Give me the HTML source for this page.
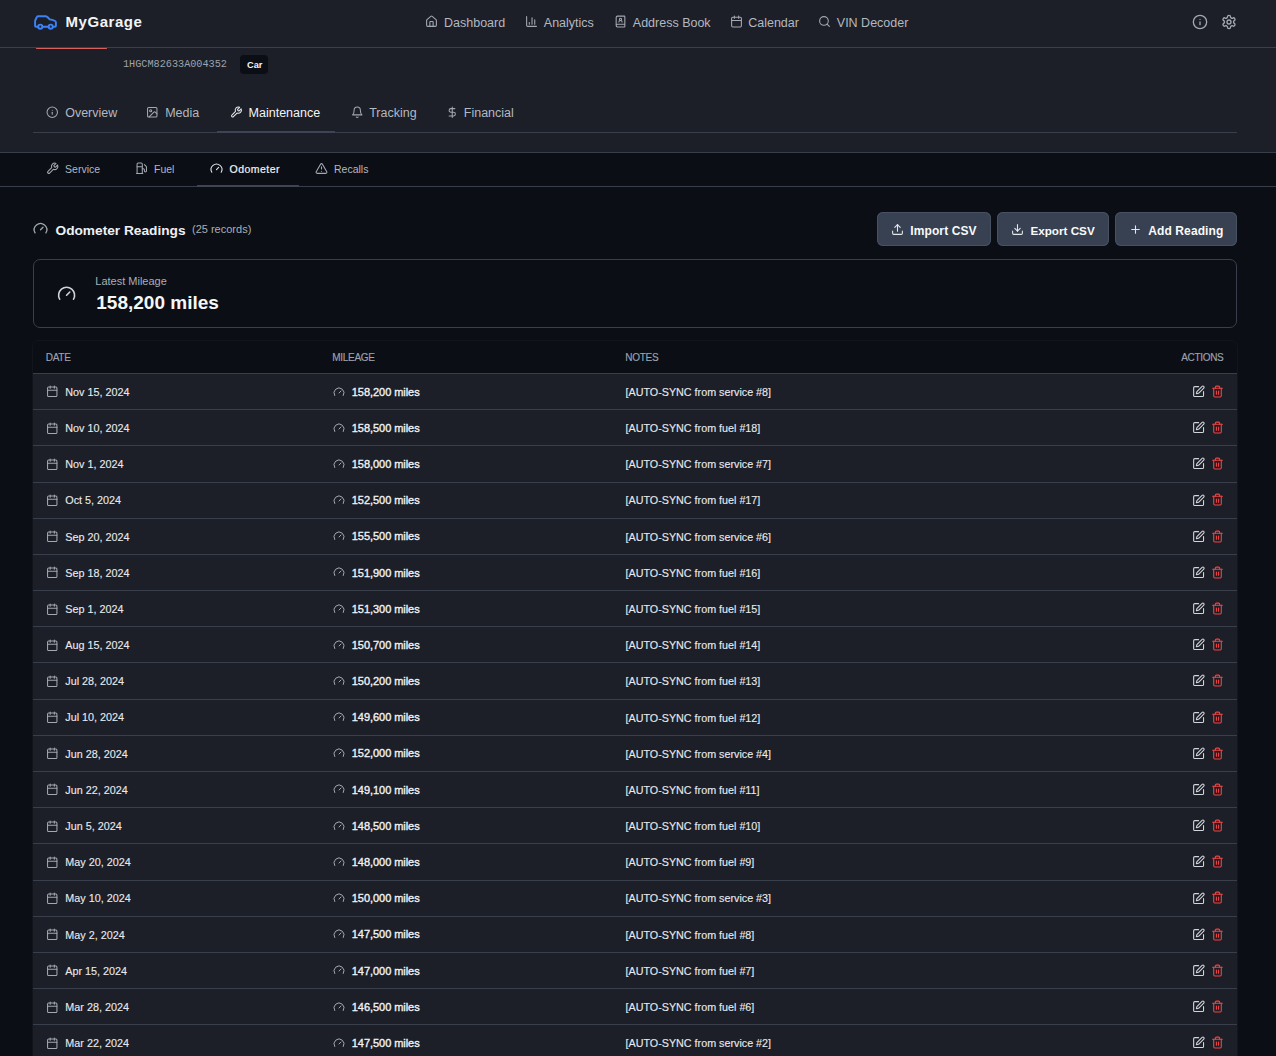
<!DOCTYPE html>
<html><head><meta charset="utf-8"><title>MyGarage</title>
<style>
html,body{margin:0;padding:0}
body{width:1276px;height:1056px;overflow:hidden;background:#0b0e15;position:relative;font-family:"Liberation Sans",sans-serif}
.blk{position:absolute}
.t{position:absolute;white-space:nowrap}
.ic{position:absolute;overflow:visible}
</style></head><body>
<div class="blk" style="left:0;top:0;width:1276px;height:152px;background:#1c1f27"></div>
<div class="blk" style="left:0;top:47px;width:1276px;height:1px;background:#393e4b"></div>
<div class="blk" style="left:36px;top:48px;width:71px;height:1px;background:#d8615e;border-radius:1px"></div>
<svg class="ic" style="left:33.3px;top:9.2px;width:25px;height:25px;" viewBox="0 0 24 24" fill="none" stroke="#3b82f6" stroke-width="1.85" stroke-linecap="round" stroke-linejoin="round"><path d="M19 17h2c.6 0 1-.4 1-1v-3c0-.9-.7-1.7-1.5-1.9C18.7 10.6 16 10 16 10s-1.3-1.4-2.2-2.3c-.5-.4-1.1-.7-1.8-.7H5c-.6 0-1.1.4-1.4.9l-1.4 2.9A3.7 3.7 0 0 0 2 12v4c0 .6.4 1 1 1h2"/><circle cx="7" cy="17" r="2"/><path d="M9 17h6"/><circle cx="17" cy="17" r="2"/></svg>
<div class="t" style="left:65.5px;top:14.40px;font-size:15px;line-height:15px;color:#f3f4f6;font-weight:700;font-family:'Liberation Sans', sans-serif;letter-spacing:0.55px">MyGarage</div>
<svg class="ic" style="left:425.3px;top:15.1px;width:13px;height:13px;" viewBox="0 0 24 24" fill="none" stroke="#a3a8b1" stroke-width="2" stroke-linecap="round" stroke-linejoin="round"><path d="M15 21v-8a1 1 0 0 0-1-1h-4a1 1 0 0 0-1 1v8"/><path d="M3 10a2 2 0 0 1 .709-1.528l7-5.999a2 2 0 0 1 2.582 0l7 5.999A2 2 0 0 1 21 10v9a2 2 0 0 1-2 2H5a2 2 0 0 1-2-2z"/></svg>
<div class="t" style="left:444.0px;top:16.92px;font-size:12.5px;line-height:12.5px;color:#b3b8c1;font-weight:400;font-family:'Liberation Sans', sans-serif;">Dashboard</div>
<svg class="ic" style="left:525.3px;top:15.1px;width:13px;height:13px;" viewBox="0 0 24 24" fill="none" stroke="#a3a8b1" stroke-width="2" stroke-linecap="round" stroke-linejoin="round"><path d="M3 3v16a2 2 0 0 0 2 2h16"/><path d="M18 17V9"/><path d="M13 17V5"/><path d="M8 17v-3"/></svg>
<div class="t" style="left:543.8000000000001px;top:16.92px;font-size:12.5px;line-height:12.5px;color:#b3b8c1;font-weight:400;font-family:'Liberation Sans', sans-serif;">Analytics</div>
<svg class="ic" style="left:614.0px;top:15.1px;width:13px;height:13px;" viewBox="0 0 24 24" fill="none" stroke="#a3a8b1" stroke-width="2" stroke-linecap="round" stroke-linejoin="round"><path d="M15 13a3 3 0 1 0-6 0"/><path d="M4 19.5v-15A2.5 2.5 0 0 1 6.5 2H19a1 1 0 0 1 1 1v18a1 1 0 0 1-1 1H6.5a1 1 0 0 1 0-5H20"/><circle cx="12" cy="8" r="2"/></svg>
<div class="t" style="left:632.8000000000001px;top:16.92px;font-size:12.5px;line-height:12.5px;color:#b3b8c1;font-weight:400;font-family:'Liberation Sans', sans-serif;">Address Book</div>
<svg class="ic" style="left:730.3px;top:15.1px;width:13px;height:13px;" viewBox="0 0 24 24" fill="none" stroke="#a3a8b1" stroke-width="2" stroke-linecap="round" stroke-linejoin="round"><path d="M8 2v4"/><path d="M16 2v4"/><rect width="18" height="18" x="3" y="4" rx="2"/><path d="M3 10h18"/></svg>
<div class="t" style="left:748.2px;top:16.92px;font-size:12.5px;line-height:12.5px;color:#b3b8c1;font-weight:400;font-family:'Liberation Sans', sans-serif;">Calendar</div>
<svg class="ic" style="left:818.3px;top:15.1px;width:13px;height:13px;" viewBox="0 0 24 24" fill="none" stroke="#a3a8b1" stroke-width="2" stroke-linecap="round" stroke-linejoin="round"><circle cx="11" cy="11" r="8"/><path d="m21 21-4.3-4.3"/></svg>
<div class="t" style="left:836.8000000000001px;top:16.92px;font-size:12.5px;line-height:12.5px;color:#b3b8c1;font-weight:400;font-family:'Liberation Sans', sans-serif;">VIN Decoder</div>
<svg class="ic" style="left:1192px;top:14px;width:16px;height:16px;" viewBox="0 0 24 24" fill="none" stroke="#a3a8b1" stroke-width="2" stroke-linecap="round" stroke-linejoin="round"><circle cx="12" cy="12" r="10"/><path d="M12 16v-4"/><path d="M12 8h.01"/></svg>
<svg class="ic" style="left:1221px;top:14px;width:16px;height:16px;" viewBox="0 0 24 24" fill="none" stroke="#a3a8b1" stroke-width="2" stroke-linecap="round" stroke-linejoin="round"><path d="M12.22 2h-.44a2 2 0 0 0-2 2v.18a2 2 0 0 1-1 1.73l-.43.25a2 2 0 0 1-2 0l-.15-.08a2 2 0 0 0-2.73.73l-.22.38a2 2 0 0 0 .73 2.73l.15.1a2 2 0 0 1 1 1.72v.51a2 2 0 0 1-1 1.74l-.15.09a2 2 0 0 0-.73 2.73l.22.38a2 2 0 0 0 2.73.73l.15-.08a2 2 0 0 1 2 0l.43.25a2 2 0 0 1 1 1.73V20a2 2 0 0 0 2 2h.44a2 2 0 0 0 2-2v-.18a2 2 0 0 1 1-1.73l.43-.25a2 2 0 0 1 2 0l.15.08a2 2 0 0 0 2.73-.73l.22-.39a2 2 0 0 0-.73-2.73l-.15-.08a2 2 0 0 1-1-1.74v-.5a2 2 0 0 1 1-1.74l.15-.09a2 2 0 0 0 .73-2.73l-.22-.38a2 2 0 0 0-2.73-.73l-.15.08a2 2 0 0 1-2 0l-.43-.25a2 2 0 0 1-1-1.73V4a2 2 0 0 0-2-2z"/><circle cx="12" cy="12" r="3"/></svg>
<div class="t" style="left:123px;top:60.37px;font-size:10.2px;line-height:10.2px;color:#9ca3af;font-weight:400;font-family:'Liberation Mono', monospace;">1HGCM82633A004352</div>
<div class="blk" style="left:240px;top:55px;width:28px;height:19px;background:#0b0e15;border-radius:4px"></div>
<div class="t" style="left:247px;top:60.81px;font-size:9.2px;line-height:9.2px;color:#f3f4f6;font-weight:700;font-family:'Liberation Sans', sans-serif;">Car</div>
<svg class="ic" style="left:46.25px;top:105.75px;width:12.5px;height:12.5px;" viewBox="0 0 24 24" fill="none" stroke="#a3a8b1" stroke-width="2" stroke-linecap="round" stroke-linejoin="round"><circle cx="12" cy="12" r="10"/><path d="M12 16v-4"/><path d="M12 8h.01"/></svg>
<div class="t" style="left:65.2px;top:106.62px;font-size:12.5px;line-height:12.5px;color:#b3b8c1;font-weight:400;font-family:'Liberation Sans', sans-serif;">Overview</div>
<svg class="ic" style="left:146.15px;top:105.75px;width:12.5px;height:12.5px;" viewBox="0 0 24 24" fill="none" stroke="#a3a8b1" stroke-width="2" stroke-linecap="round" stroke-linejoin="round"><rect width="18" height="18" x="3" y="3" rx="2" ry="2"/><circle cx="9" cy="9" r="2"/><path d="m21 15-3.086-3.086a2 2 0 0 0-2.828 0L6 21"/></svg>
<div class="t" style="left:165.2px;top:106.62px;font-size:12.5px;line-height:12.5px;color:#b3b8c1;font-weight:400;font-family:'Liberation Sans', sans-serif;">Media</div>
<svg class="ic" style="left:230.15px;top:105.75px;width:12.5px;height:12.5px;" viewBox="0 0 24 24" fill="none" stroke="#e5e7eb" stroke-width="2" stroke-linecap="round" stroke-linejoin="round"><path d="M14.7 6.3a1 1 0 0 0 0 1.4l1.6 1.6a1 1 0 0 0 1.4 0l3.77-3.77a6 6 0 0 1-7.94 7.94l-6.91 6.91a2.12 2.12 0 0 1-3-3l6.910-6.91a6 6 0 0 1 7.94-7.94l-3.76 3.760z"/></svg>
<div class="t" style="left:248.6px;top:106.62px;font-size:12.5px;line-height:12.5px;color:#f3f4f6;font-weight:400;font-family:'Liberation Sans', sans-serif;">Maintenance</div>
<svg class="ic" style="left:350.85px;top:105.75px;width:12.5px;height:12.5px;" viewBox="0 0 24 24" fill="none" stroke="#a3a8b1" stroke-width="2" stroke-linecap="round" stroke-linejoin="round"><path d="M6 8a6 6 0 0 1 12 0c0 7 3 9 3 9H3s3-2 3-9"/><path d="M10.3 21a1.94 1.94 0 0 0 3.4 0"/></svg>
<div class="t" style="left:369.2px;top:106.62px;font-size:12.5px;line-height:12.5px;color:#b3b8c1;font-weight:400;font-family:'Liberation Sans', sans-serif;">Tracking</div>
<svg class="ic" style="left:445.55px;top:105.75px;width:12.5px;height:12.5px;" viewBox="0 0 24 24" fill="none" stroke="#a3a8b1" stroke-width="2" stroke-linecap="round" stroke-linejoin="round"><line x1="12" x2="12" y1="2" y2="22"/><path d="M17 5H9.5a3.5 3.5 0 0 0 0 7h5a3.5 3.5 0 0 1 0 7H6"/></svg>
<div class="t" style="left:463.8px;top:106.62px;font-size:12.5px;line-height:12.5px;color:#b3b8c1;font-weight:400;font-family:'Liberation Sans', sans-serif;">Financial</div>
<div class="blk" style="left:33px;top:132px;width:1204px;height:1px;background:#393e4b"></div>
<div class="blk" style="left:217px;top:131px;width:118px;height:2px;background:#3f4454"></div>
<div class="blk" style="left:0;top:152px;width:1276px;height:1px;background:#393e4b"></div>
<div class="blk" style="left:0;top:186px;width:1276px;height:1px;background:#393e4b"></div>
<svg class="ic" style="left:45.8px;top:161.8px;width:13px;height:13px;" viewBox="0 0 24 24" fill="none" stroke="#a3a8b1" stroke-width="2" stroke-linecap="round" stroke-linejoin="round"><path d="M14.7 6.3a1 1 0 0 0 0 1.4l1.6 1.6a1 1 0 0 0 1.4 0l3.77-3.77a6 6 0 0 1-7.94 7.94l-6.91 6.91a2.12 2.12 0 0 1-3-3l6.910-6.91a6 6 0 0 1 7.94-7.94l-3.76 3.760z"/></svg>
<div class="t" style="left:65.1px;top:164.11px;font-size:10.5px;line-height:10.5px;color:#b3b8c1;font-weight:400;font-family:'Liberation Sans', sans-serif;">Service</div>
<svg class="ic" style="left:135.1px;top:161.8px;width:12.5px;height:12.5px;" viewBox="0 0 24 24" fill="none" stroke="#a3a8b1" stroke-width="2" stroke-linecap="round" stroke-linejoin="round"><line x1="3" x2="15" y1="22" y2="22"/><line x1="4" x2="14" y1="9" y2="9"/><path d="M14 22V4a2 2 0 0 0-2-2H6a2 2 0 0 0-2 2v18"/><path d="M14 13h2a2 2 0 0 1 2 2v2a2 2 0 0 0 2 2a2 2 0 0 0 2-2V9.83a2 2 0 0 0-.59-1.42L18 5"/></svg>
<div class="t" style="left:154.0px;top:164.11px;font-size:10.5px;line-height:10.5px;color:#b3b8c1;font-weight:400;font-family:'Liberation Sans', sans-serif;">Fuel</div>
<svg class="ic" style="left:210.0px;top:162.05px;width:13px;height:13px;" viewBox="0 0 24 24" fill="none" stroke="#e5e7eb" stroke-width="2" stroke-linecap="round" stroke-linejoin="round"><path d="m12 14 4-4"/><path d="M3.34 19a10 10 0 1 1 17.32 0"/></svg>
<div class="t" style="left:229.60000000000002px;top:164.11px;font-size:10.5px;line-height:10.5px;color:#f3f4f6;font-weight:400;font-family:'Liberation Sans', sans-serif;-webkit-text-stroke:0.2px #f3f4f6;letter-spacing:0.45px">Odometer</div>
<svg class="ic" style="left:314.8px;top:161.8px;width:13px;height:13px;" viewBox="0 0 24 24" fill="none" stroke="#a3a8b1" stroke-width="2" stroke-linecap="round" stroke-linejoin="round"><path d="m21.73 18-8-14a2 2 0 0 0-3.48 0l-8 14A2 2 0 0 0 4 21h16a2 2 0 0 0 1.73-3"/><path d="M12 9v4"/><path d="M12 17h.01"/></svg>
<div class="t" style="left:334.0px;top:164.11px;font-size:10.5px;line-height:10.5px;color:#b3b8c1;font-weight:400;font-family:'Liberation Sans', sans-serif;">Recalls</div>
<div class="blk" style="left:197px;top:185px;width:102px;height:2px;background:#3f4454"></div>
<svg class="ic" style="left:33px;top:221px;width:15px;height:15px;" viewBox="0 0 24 24" fill="none" stroke="#a3a8b1" stroke-width="2" stroke-linecap="round" stroke-linejoin="round"><path d="m12 14 4-4"/><path d="M3.34 19a10 10 0 1 1 17.32 0"/></svg>
<div class="t" style="left:55.5px;top:223.90px;font-size:13.7px;line-height:13.7px;color:#eef0f3;font-weight:700;font-family:'Liberation Sans', sans-serif;">Odometer Readings</div>
<div class="t" style="left:192px;top:224.19px;font-size:11px;line-height:11px;color:#a9aeb7;font-weight:400;font-family:'Liberation Sans', sans-serif;">(25 records)</div>
<div class="blk" style="left:877px;top:212px;width:114px;height:34px;background:#374151;border-radius:6px;box-shadow:inset 0 0 0 1px #475162"></div>
<svg class="ic" style="left:891.0px;top:223.1px;width:13px;height:13px;" viewBox="0 0 24 24" fill="none" stroke="#e5e7eb" stroke-width="2" stroke-linecap="round" stroke-linejoin="round"><path d="M21 15v4a2 2 0 0 1-2 2H5a2 2 0 0 1-2-2v-4"/><polyline points="17 8 12 3 7 8"/><line x1="12" x2="12" y1="3" y2="15"/></svg>
<div class="t" style="left:910.3px;top:224.84px;font-size:12px;line-height:12px;color:#f9fafb;font-weight:700;font-family:'Liberation Sans', sans-serif;letter-spacing:0.1px">Import CSV</div>
<div class="blk" style="left:997px;top:212px;width:112px;height:34px;background:#374151;border-radius:6px;box-shadow:inset 0 0 0 1px #475162"></div>
<svg class="ic" style="left:1011.0px;top:223.1px;width:13px;height:13px;" viewBox="0 0 24 24" fill="none" stroke="#e5e7eb" stroke-width="2" stroke-linecap="round" stroke-linejoin="round"><path d="M21 15v4a2 2 0 0 1-2 2H5a2 2 0 0 1-2-2v-4"/><polyline points="7 10 12 15 17 10"/><line x1="12" x2="12" y1="15" y2="3"/></svg>
<div class="t" style="left:1030.3999999999999px;top:225.10px;font-size:11.7px;line-height:11.7px;color:#f9fafb;font-weight:700;font-family:'Liberation Sans', sans-serif;">Export CSV</div>
<div class="blk" style="left:1115px;top:212px;width:122px;height:34px;background:#374151;border-radius:6px;box-shadow:inset 0 0 0 1px #475162"></div>
<svg class="ic" style="left:1129.0px;top:223.1px;width:13px;height:13px;" viewBox="0 0 24 24" fill="none" stroke="#e5e7eb" stroke-width="2" stroke-linecap="round" stroke-linejoin="round"><path d="M5 12h14"/><path d="M12 5v14"/></svg>
<div class="t" style="left:1148.3px;top:224.84px;font-size:12px;line-height:12px;color:#f9fafb;font-weight:700;font-family:'Liberation Sans', sans-serif;letter-spacing:0.1px">Add Reading</div>
<div class="blk" style="left:33px;top:259px;width:1202px;height:67px;border:1px solid #3a3e4d;border-radius:7px"></div>
<svg class="ic" style="left:57.2px;top:284.2px;width:19.2px;height:19.2px;" viewBox="0 0 24 24" fill="none" stroke="#d1d5db" stroke-width="2" stroke-linecap="round" stroke-linejoin="round"><path d="m12 14 4-4"/><path d="M3.34 19a10 10 0 1 1 17.32 0"/></svg>
<div class="t" style="left:95.3px;top:275.69px;font-size:11px;line-height:11px;color:#a9aeb7;font-weight:400;font-family:'Liberation Sans', sans-serif;">Latest Mileage</div>
<div class="t" style="left:96.3px;top:292.92px;font-size:19px;line-height:19px;color:#f5f6f8;font-weight:700;font-family:'Liberation Sans', sans-serif;">158,200 miles</div>
<div class="blk" style="left:32px;top:340px;width:1204px;height:800px;border:1px solid #12151c;border-radius:7px"></div>
<div class="t" style="left:45.8px;top:352.54px;font-size:10px;line-height:10px;color:#9ca3af;font-weight:400;font-family:'Liberation Sans', sans-serif;letter-spacing:-0.3px;-webkit-text-stroke:0.15px #9ca3af">DATE</div>
<div class="t" style="left:332.3px;top:352.54px;font-size:10px;line-height:10px;color:#9ca3af;font-weight:400;font-family:'Liberation Sans', sans-serif;letter-spacing:-0.3px;-webkit-text-stroke:0.15px #9ca3af">MILEAGE</div>
<div class="t" style="left:625.3px;top:352.54px;font-size:10px;line-height:10px;color:#9ca3af;font-weight:400;font-family:'Liberation Sans', sans-serif;letter-spacing:-0.3px;-webkit-text-stroke:0.15px #9ca3af">NOTES</div>
<div class="t" style="right:52.5px;top:352.54px;font-size:10px;line-height:10px;color:#9ca3af;letter-spacing:-0.3px;-webkit-text-stroke:0.15px #9ca3af">ACTIONS</div>
<div class="blk" style="left:33px;top:373px;width:1204px;height:36px;background:#1c1f27;border-top:1px solid #393e4b;box-sizing:border-box"></div>
<svg class="ic" style="left:46.15px;top:385.45px;width:12.5px;height:12.5px;" viewBox="0 0 24 24" fill="none" stroke="#a3a8b1" stroke-width="2" stroke-linecap="round" stroke-linejoin="round"><path d="M8 2v4"/><path d="M16 2v4"/><rect width="18" height="18" x="3" y="4" rx="2"/><path d="M3 10h18"/></svg>
<div class="t" style="left:65.3px;top:386.86px;font-size:10.8px;line-height:10.8px;color:#e8eaee;font-weight:400;font-family:'Liberation Sans', sans-serif;-webkit-text-stroke:0.12px #e8eaee">Nov 15, 2024</div>
<svg class="ic" style="left:333.4px;top:385.5px;width:12px;height:12px;" viewBox="0 0 24 24" fill="none" stroke="#a3a8b1" stroke-width="2" stroke-linecap="round" stroke-linejoin="round"><path d="m12 14 4-4"/><path d="M3.34 19a10 10 0 1 1 17.32 0"/></svg>
<div class="t" style="left:351.8px;top:386.69px;font-size:11px;line-height:11px;color:#f1f2f4;font-weight:400;font-family:'Liberation Sans', sans-serif;-webkit-text-stroke:0.35px #f1f2f4;letter-spacing:-0.05px">158,200 miles</div>
<div class="t" style="left:625.5px;top:386.90px;font-size:10.75px;line-height:10.75px;color:#e8eaee;font-weight:400;font-family:'Liberation Sans', sans-serif;-webkit-text-stroke:0.12px #e8eaee">[AUTO-SYNC from service #8]</div>
<svg class="ic" style="left:1191.8px;top:385.0px;width:13.2px;height:13.2px;" viewBox="0 0 24 24" fill="none" stroke="#d1d5db" stroke-width="2" stroke-linecap="round" stroke-linejoin="round"><path d="M12 3H5a2 2 0 0 0-2 2v14a2 2 0 0 0 2 2h14a2 2 0 0 0 2-2v-7"/><path d="M18.375 2.625a1 1 0 0 1 3 3l-9.013 9.014a2 2 0 0 1-.853.505l-2.873.84a.5.5 0 0 1-.62-.62l.84-2.873a2 2 0 0 1 .506-.852z"/></svg>
<svg class="ic" style="left:1211px;top:384.9px;width:13px;height:13px;" viewBox="0 0 24 24" fill="none" stroke="#ef4444" stroke-width="2" stroke-linecap="round" stroke-linejoin="round"><path d="M3 6h18"/><path d="M19 6v14c0 1-1 2-2 2H7c-1 0-2-1-2-2V6"/><path d="M8 6V4c0-1 1-2 2-2h4c1 0 2 1 2 2v2"/><line x1="10" x2="10" y1="11" y2="17"/><line x1="14" x2="14" y1="11" y2="17"/></svg>
<div class="blk" style="left:33px;top:409px;width:1204px;height:36px;background:#1c1f27;border-top:1px solid #393e4b;box-sizing:border-box"></div>
<svg class="ic" style="left:46.15px;top:421.63px;width:12.5px;height:12.5px;" viewBox="0 0 24 24" fill="none" stroke="#a3a8b1" stroke-width="2" stroke-linecap="round" stroke-linejoin="round"><path d="M8 2v4"/><path d="M16 2v4"/><rect width="18" height="18" x="3" y="4" rx="2"/><path d="M3 10h18"/></svg>
<div class="t" style="left:65.3px;top:423.04px;font-size:10.8px;line-height:10.8px;color:#e8eaee;font-weight:400;font-family:'Liberation Sans', sans-serif;-webkit-text-stroke:0.12px #e8eaee">Nov 10, 2024</div>
<svg class="ic" style="left:333.4px;top:421.68px;width:12px;height:12px;" viewBox="0 0 24 24" fill="none" stroke="#a3a8b1" stroke-width="2" stroke-linecap="round" stroke-linejoin="round"><path d="m12 14 4-4"/><path d="M3.34 19a10 10 0 1 1 17.32 0"/></svg>
<div class="t" style="left:351.8px;top:422.87px;font-size:11px;line-height:11px;color:#f1f2f4;font-weight:400;font-family:'Liberation Sans', sans-serif;-webkit-text-stroke:0.35px #f1f2f4;letter-spacing:-0.05px">158,500 miles</div>
<div class="t" style="left:625.5px;top:423.08px;font-size:10.75px;line-height:10.75px;color:#e8eaee;font-weight:400;font-family:'Liberation Sans', sans-serif;-webkit-text-stroke:0.12px #e8eaee">[AUTO-SYNC from fuel #18]</div>
<svg class="ic" style="left:1191.8px;top:421.18px;width:13.2px;height:13.2px;" viewBox="0 0 24 24" fill="none" stroke="#d1d5db" stroke-width="2" stroke-linecap="round" stroke-linejoin="round"><path d="M12 3H5a2 2 0 0 0-2 2v14a2 2 0 0 0 2 2h14a2 2 0 0 0 2-2v-7"/><path d="M18.375 2.625a1 1 0 0 1 3 3l-9.013 9.014a2 2 0 0 1-.853.505l-2.873.84a.5.5 0 0 1-.62-.62l.84-2.873a2 2 0 0 1 .506-.852z"/></svg>
<svg class="ic" style="left:1211px;top:421.08px;width:13px;height:13px;" viewBox="0 0 24 24" fill="none" stroke="#ef4444" stroke-width="2" stroke-linecap="round" stroke-linejoin="round"><path d="M3 6h18"/><path d="M19 6v14c0 1-1 2-2 2H7c-1 0-2-1-2-2V6"/><path d="M8 6V4c0-1 1-2 2-2h4c1 0 2 1 2 2v2"/><line x1="10" x2="10" y1="11" y2="17"/><line x1="14" x2="14" y1="11" y2="17"/></svg>
<div class="blk" style="left:33px;top:445px;width:1204px;height:37px;background:#1c1f27;border-top:1px solid #393e4b;box-sizing:border-box"></div>
<svg class="ic" style="left:46.15px;top:457.81px;width:12.5px;height:12.5px;" viewBox="0 0 24 24" fill="none" stroke="#a3a8b1" stroke-width="2" stroke-linecap="round" stroke-linejoin="round"><path d="M8 2v4"/><path d="M16 2v4"/><rect width="18" height="18" x="3" y="4" rx="2"/><path d="M3 10h18"/></svg>
<div class="t" style="left:65.3px;top:459.22px;font-size:10.8px;line-height:10.8px;color:#e8eaee;font-weight:400;font-family:'Liberation Sans', sans-serif;-webkit-text-stroke:0.12px #e8eaee">Nov 1, 2024</div>
<svg class="ic" style="left:333.4px;top:457.86px;width:12px;height:12px;" viewBox="0 0 24 24" fill="none" stroke="#a3a8b1" stroke-width="2" stroke-linecap="round" stroke-linejoin="round"><path d="m12 14 4-4"/><path d="M3.34 19a10 10 0 1 1 17.32 0"/></svg>
<div class="t" style="left:351.8px;top:459.05px;font-size:11px;line-height:11px;color:#f1f2f4;font-weight:400;font-family:'Liberation Sans', sans-serif;-webkit-text-stroke:0.35px #f1f2f4;letter-spacing:-0.05px">158,000 miles</div>
<div class="t" style="left:625.5px;top:459.26px;font-size:10.75px;line-height:10.75px;color:#e8eaee;font-weight:400;font-family:'Liberation Sans', sans-serif;-webkit-text-stroke:0.12px #e8eaee">[AUTO-SYNC from service #7]</div>
<svg class="ic" style="left:1191.8px;top:457.36px;width:13.2px;height:13.2px;" viewBox="0 0 24 24" fill="none" stroke="#d1d5db" stroke-width="2" stroke-linecap="round" stroke-linejoin="round"><path d="M12 3H5a2 2 0 0 0-2 2v14a2 2 0 0 0 2 2h14a2 2 0 0 0 2-2v-7"/><path d="M18.375 2.625a1 1 0 0 1 3 3l-9.013 9.014a2 2 0 0 1-.853.505l-2.873.84a.5.5 0 0 1-.62-.62l.84-2.873a2 2 0 0 1 .506-.852z"/></svg>
<svg class="ic" style="left:1211px;top:457.26px;width:13px;height:13px;" viewBox="0 0 24 24" fill="none" stroke="#ef4444" stroke-width="2" stroke-linecap="round" stroke-linejoin="round"><path d="M3 6h18"/><path d="M19 6v14c0 1-1 2-2 2H7c-1 0-2-1-2-2V6"/><path d="M8 6V4c0-1 1-2 2-2h4c1 0 2 1 2 2v2"/><line x1="10" x2="10" y1="11" y2="17"/><line x1="14" x2="14" y1="11" y2="17"/></svg>
<div class="blk" style="left:33px;top:482px;width:1204px;height:36px;background:#1c1f27;border-top:1px solid #393e4b;box-sizing:border-box"></div>
<svg class="ic" style="left:46.15px;top:493.98999999999995px;width:12.5px;height:12.5px;" viewBox="0 0 24 24" fill="none" stroke="#a3a8b1" stroke-width="2" stroke-linecap="round" stroke-linejoin="round"><path d="M8 2v4"/><path d="M16 2v4"/><rect width="18" height="18" x="3" y="4" rx="2"/><path d="M3 10h18"/></svg>
<div class="t" style="left:65.3px;top:495.40px;font-size:10.8px;line-height:10.8px;color:#e8eaee;font-weight:400;font-family:'Liberation Sans', sans-serif;-webkit-text-stroke:0.12px #e8eaee">Oct 5, 2024</div>
<svg class="ic" style="left:333.4px;top:494.03999999999996px;width:12px;height:12px;" viewBox="0 0 24 24" fill="none" stroke="#a3a8b1" stroke-width="2" stroke-linecap="round" stroke-linejoin="round"><path d="m12 14 4-4"/><path d="M3.34 19a10 10 0 1 1 17.32 0"/></svg>
<div class="t" style="left:351.8px;top:495.23px;font-size:11px;line-height:11px;color:#f1f2f4;font-weight:400;font-family:'Liberation Sans', sans-serif;-webkit-text-stroke:0.35px #f1f2f4;letter-spacing:-0.05px">152,500 miles</div>
<div class="t" style="left:625.5px;top:495.44px;font-size:10.75px;line-height:10.75px;color:#e8eaee;font-weight:400;font-family:'Liberation Sans', sans-serif;-webkit-text-stroke:0.12px #e8eaee">[AUTO-SYNC from fuel #17]</div>
<svg class="ic" style="left:1191.8px;top:493.53999999999996px;width:13.2px;height:13.2px;" viewBox="0 0 24 24" fill="none" stroke="#d1d5db" stroke-width="2" stroke-linecap="round" stroke-linejoin="round"><path d="M12 3H5a2 2 0 0 0-2 2v14a2 2 0 0 0 2 2h14a2 2 0 0 0 2-2v-7"/><path d="M18.375 2.625a1 1 0 0 1 3 3l-9.013 9.014a2 2 0 0 1-.853.505l-2.873.84a.5.5 0 0 1-.62-.62l.84-2.873a2 2 0 0 1 .506-.852z"/></svg>
<svg class="ic" style="left:1211px;top:493.43999999999994px;width:13px;height:13px;" viewBox="0 0 24 24" fill="none" stroke="#ef4444" stroke-width="2" stroke-linecap="round" stroke-linejoin="round"><path d="M3 6h18"/><path d="M19 6v14c0 1-1 2-2 2H7c-1 0-2-1-2-2V6"/><path d="M8 6V4c0-1 1-2 2-2h4c1 0 2 1 2 2v2"/><line x1="10" x2="10" y1="11" y2="17"/><line x1="14" x2="14" y1="11" y2="17"/></svg>
<div class="blk" style="left:33px;top:518px;width:1204px;height:36px;background:#1c1f27;border-top:1px solid #393e4b;box-sizing:border-box"></div>
<svg class="ic" style="left:46.15px;top:530.1700000000001px;width:12.5px;height:12.5px;" viewBox="0 0 24 24" fill="none" stroke="#a3a8b1" stroke-width="2" stroke-linecap="round" stroke-linejoin="round"><path d="M8 2v4"/><path d="M16 2v4"/><rect width="18" height="18" x="3" y="4" rx="2"/><path d="M3 10h18"/></svg>
<div class="t" style="left:65.3px;top:531.58px;font-size:10.8px;line-height:10.8px;color:#e8eaee;font-weight:400;font-family:'Liberation Sans', sans-serif;-webkit-text-stroke:0.12px #e8eaee">Sep 20, 2024</div>
<svg class="ic" style="left:333.4px;top:530.22px;width:12px;height:12px;" viewBox="0 0 24 24" fill="none" stroke="#a3a8b1" stroke-width="2" stroke-linecap="round" stroke-linejoin="round"><path d="m12 14 4-4"/><path d="M3.34 19a10 10 0 1 1 17.32 0"/></svg>
<div class="t" style="left:351.8px;top:531.41px;font-size:11px;line-height:11px;color:#f1f2f4;font-weight:400;font-family:'Liberation Sans', sans-serif;-webkit-text-stroke:0.35px #f1f2f4;letter-spacing:-0.05px">155,500 miles</div>
<div class="t" style="left:625.5px;top:531.62px;font-size:10.75px;line-height:10.75px;color:#e8eaee;font-weight:400;font-family:'Liberation Sans', sans-serif;-webkit-text-stroke:0.12px #e8eaee">[AUTO-SYNC from service #6]</div>
<svg class="ic" style="left:1191.8px;top:529.72px;width:13.2px;height:13.2px;" viewBox="0 0 24 24" fill="none" stroke="#d1d5db" stroke-width="2" stroke-linecap="round" stroke-linejoin="round"><path d="M12 3H5a2 2 0 0 0-2 2v14a2 2 0 0 0 2 2h14a2 2 0 0 0 2-2v-7"/><path d="M18.375 2.625a1 1 0 0 1 3 3l-9.013 9.014a2 2 0 0 1-.853.505l-2.873.84a.5.5 0 0 1-.62-.62l.84-2.873a2 2 0 0 1 .506-.852z"/></svg>
<svg class="ic" style="left:1211px;top:529.62px;width:13px;height:13px;" viewBox="0 0 24 24" fill="none" stroke="#ef4444" stroke-width="2" stroke-linecap="round" stroke-linejoin="round"><path d="M3 6h18"/><path d="M19 6v14c0 1-1 2-2 2H7c-1 0-2-1-2-2V6"/><path d="M8 6V4c0-1 1-2 2-2h4c1 0 2 1 2 2v2"/><line x1="10" x2="10" y1="11" y2="17"/><line x1="14" x2="14" y1="11" y2="17"/></svg>
<div class="blk" style="left:33px;top:554px;width:1204px;height:36px;background:#1c1f27;border-top:1px solid #393e4b;box-sizing:border-box"></div>
<svg class="ic" style="left:46.15px;top:566.35px;width:12.5px;height:12.5px;" viewBox="0 0 24 24" fill="none" stroke="#a3a8b1" stroke-width="2" stroke-linecap="round" stroke-linejoin="round"><path d="M8 2v4"/><path d="M16 2v4"/><rect width="18" height="18" x="3" y="4" rx="2"/><path d="M3 10h18"/></svg>
<div class="t" style="left:65.3px;top:567.76px;font-size:10.8px;line-height:10.8px;color:#e8eaee;font-weight:400;font-family:'Liberation Sans', sans-serif;-webkit-text-stroke:0.12px #e8eaee">Sep 18, 2024</div>
<svg class="ic" style="left:333.4px;top:566.4px;width:12px;height:12px;" viewBox="0 0 24 24" fill="none" stroke="#a3a8b1" stroke-width="2" stroke-linecap="round" stroke-linejoin="round"><path d="m12 14 4-4"/><path d="M3.34 19a10 10 0 1 1 17.32 0"/></svg>
<div class="t" style="left:351.8px;top:567.59px;font-size:11px;line-height:11px;color:#f1f2f4;font-weight:400;font-family:'Liberation Sans', sans-serif;-webkit-text-stroke:0.35px #f1f2f4;letter-spacing:-0.05px">151,900 miles</div>
<div class="t" style="left:625.5px;top:567.80px;font-size:10.75px;line-height:10.75px;color:#e8eaee;font-weight:400;font-family:'Liberation Sans', sans-serif;-webkit-text-stroke:0.12px #e8eaee">[AUTO-SYNC from fuel #16]</div>
<svg class="ic" style="left:1191.8px;top:565.9px;width:13.2px;height:13.2px;" viewBox="0 0 24 24" fill="none" stroke="#d1d5db" stroke-width="2" stroke-linecap="round" stroke-linejoin="round"><path d="M12 3H5a2 2 0 0 0-2 2v14a2 2 0 0 0 2 2h14a2 2 0 0 0 2-2v-7"/><path d="M18.375 2.625a1 1 0 0 1 3 3l-9.013 9.014a2 2 0 0 1-.853.505l-2.873.84a.5.5 0 0 1-.62-.62l.84-2.873a2 2 0 0 1 .506-.852z"/></svg>
<svg class="ic" style="left:1211px;top:565.8px;width:13px;height:13px;" viewBox="0 0 24 24" fill="none" stroke="#ef4444" stroke-width="2" stroke-linecap="round" stroke-linejoin="round"><path d="M3 6h18"/><path d="M19 6v14c0 1-1 2-2 2H7c-1 0-2-1-2-2V6"/><path d="M8 6V4c0-1 1-2 2-2h4c1 0 2 1 2 2v2"/><line x1="10" x2="10" y1="11" y2="17"/><line x1="14" x2="14" y1="11" y2="17"/></svg>
<div class="blk" style="left:33px;top:590px;width:1204px;height:36px;background:#1c1f27;border-top:1px solid #393e4b;box-sizing:border-box"></div>
<svg class="ic" style="left:46.15px;top:602.53px;width:12.5px;height:12.5px;" viewBox="0 0 24 24" fill="none" stroke="#a3a8b1" stroke-width="2" stroke-linecap="round" stroke-linejoin="round"><path d="M8 2v4"/><path d="M16 2v4"/><rect width="18" height="18" x="3" y="4" rx="2"/><path d="M3 10h18"/></svg>
<div class="t" style="left:65.3px;top:603.94px;font-size:10.8px;line-height:10.8px;color:#e8eaee;font-weight:400;font-family:'Liberation Sans', sans-serif;-webkit-text-stroke:0.12px #e8eaee">Sep 1, 2024</div>
<svg class="ic" style="left:333.4px;top:602.5799999999999px;width:12px;height:12px;" viewBox="0 0 24 24" fill="none" stroke="#a3a8b1" stroke-width="2" stroke-linecap="round" stroke-linejoin="round"><path d="m12 14 4-4"/><path d="M3.34 19a10 10 0 1 1 17.32 0"/></svg>
<div class="t" style="left:351.8px;top:603.77px;font-size:11px;line-height:11px;color:#f1f2f4;font-weight:400;font-family:'Liberation Sans', sans-serif;-webkit-text-stroke:0.35px #f1f2f4;letter-spacing:-0.05px">151,300 miles</div>
<div class="t" style="left:625.5px;top:603.98px;font-size:10.75px;line-height:10.75px;color:#e8eaee;font-weight:400;font-family:'Liberation Sans', sans-serif;-webkit-text-stroke:0.12px #e8eaee">[AUTO-SYNC from fuel #15]</div>
<svg class="ic" style="left:1191.8px;top:602.0799999999999px;width:13.2px;height:13.2px;" viewBox="0 0 24 24" fill="none" stroke="#d1d5db" stroke-width="2" stroke-linecap="round" stroke-linejoin="round"><path d="M12 3H5a2 2 0 0 0-2 2v14a2 2 0 0 0 2 2h14a2 2 0 0 0 2-2v-7"/><path d="M18.375 2.625a1 1 0 0 1 3 3l-9.013 9.014a2 2 0 0 1-.853.505l-2.873.84a.5.5 0 0 1-.62-.62l.84-2.873a2 2 0 0 1 .506-.852z"/></svg>
<svg class="ic" style="left:1211px;top:601.9799999999999px;width:13px;height:13px;" viewBox="0 0 24 24" fill="none" stroke="#ef4444" stroke-width="2" stroke-linecap="round" stroke-linejoin="round"><path d="M3 6h18"/><path d="M19 6v14c0 1-1 2-2 2H7c-1 0-2-1-2-2V6"/><path d="M8 6V4c0-1 1-2 2-2h4c1 0 2 1 2 2v2"/><line x1="10" x2="10" y1="11" y2="17"/><line x1="14" x2="14" y1="11" y2="17"/></svg>
<div class="blk" style="left:33px;top:626px;width:1204px;height:36px;background:#1c1f27;border-top:1px solid #393e4b;box-sizing:border-box"></div>
<svg class="ic" style="left:46.15px;top:638.71px;width:12.5px;height:12.5px;" viewBox="0 0 24 24" fill="none" stroke="#a3a8b1" stroke-width="2" stroke-linecap="round" stroke-linejoin="round"><path d="M8 2v4"/><path d="M16 2v4"/><rect width="18" height="18" x="3" y="4" rx="2"/><path d="M3 10h18"/></svg>
<div class="t" style="left:65.3px;top:640.12px;font-size:10.8px;line-height:10.8px;color:#e8eaee;font-weight:400;font-family:'Liberation Sans', sans-serif;-webkit-text-stroke:0.12px #e8eaee">Aug 15, 2024</div>
<svg class="ic" style="left:333.4px;top:638.76px;width:12px;height:12px;" viewBox="0 0 24 24" fill="none" stroke="#a3a8b1" stroke-width="2" stroke-linecap="round" stroke-linejoin="round"><path d="m12 14 4-4"/><path d="M3.34 19a10 10 0 1 1 17.32 0"/></svg>
<div class="t" style="left:351.8px;top:639.95px;font-size:11px;line-height:11px;color:#f1f2f4;font-weight:400;font-family:'Liberation Sans', sans-serif;-webkit-text-stroke:0.35px #f1f2f4;letter-spacing:-0.05px">150,700 miles</div>
<div class="t" style="left:625.5px;top:640.16px;font-size:10.75px;line-height:10.75px;color:#e8eaee;font-weight:400;font-family:'Liberation Sans', sans-serif;-webkit-text-stroke:0.12px #e8eaee">[AUTO-SYNC from fuel #14]</div>
<svg class="ic" style="left:1191.8px;top:638.26px;width:13.2px;height:13.2px;" viewBox="0 0 24 24" fill="none" stroke="#d1d5db" stroke-width="2" stroke-linecap="round" stroke-linejoin="round"><path d="M12 3H5a2 2 0 0 0-2 2v14a2 2 0 0 0 2 2h14a2 2 0 0 0 2-2v-7"/><path d="M18.375 2.625a1 1 0 0 1 3 3l-9.013 9.014a2 2 0 0 1-.853.505l-2.873.84a.5.5 0 0 1-.62-.62l.84-2.873a2 2 0 0 1 .506-.852z"/></svg>
<svg class="ic" style="left:1211px;top:638.16px;width:13px;height:13px;" viewBox="0 0 24 24" fill="none" stroke="#ef4444" stroke-width="2" stroke-linecap="round" stroke-linejoin="round"><path d="M3 6h18"/><path d="M19 6v14c0 1-1 2-2 2H7c-1 0-2-1-2-2V6"/><path d="M8 6V4c0-1 1-2 2-2h4c1 0 2 1 2 2v2"/><line x1="10" x2="10" y1="11" y2="17"/><line x1="14" x2="14" y1="11" y2="17"/></svg>
<div class="blk" style="left:33px;top:662px;width:1204px;height:37px;background:#1c1f27;border-top:1px solid #393e4b;box-sizing:border-box"></div>
<svg class="ic" style="left:46.15px;top:674.8900000000001px;width:12.5px;height:12.5px;" viewBox="0 0 24 24" fill="none" stroke="#a3a8b1" stroke-width="2" stroke-linecap="round" stroke-linejoin="round"><path d="M8 2v4"/><path d="M16 2v4"/><rect width="18" height="18" x="3" y="4" rx="2"/><path d="M3 10h18"/></svg>
<div class="t" style="left:65.3px;top:676.30px;font-size:10.8px;line-height:10.8px;color:#e8eaee;font-weight:400;font-family:'Liberation Sans', sans-serif;-webkit-text-stroke:0.12px #e8eaee">Jul 28, 2024</div>
<svg class="ic" style="left:333.4px;top:674.94px;width:12px;height:12px;" viewBox="0 0 24 24" fill="none" stroke="#a3a8b1" stroke-width="2" stroke-linecap="round" stroke-linejoin="round"><path d="m12 14 4-4"/><path d="M3.34 19a10 10 0 1 1 17.32 0"/></svg>
<div class="t" style="left:351.8px;top:676.13px;font-size:11px;line-height:11px;color:#f1f2f4;font-weight:400;font-family:'Liberation Sans', sans-serif;-webkit-text-stroke:0.35px #f1f2f4;letter-spacing:-0.05px">150,200 miles</div>
<div class="t" style="left:625.5px;top:676.34px;font-size:10.75px;line-height:10.75px;color:#e8eaee;font-weight:400;font-family:'Liberation Sans', sans-serif;-webkit-text-stroke:0.12px #e8eaee">[AUTO-SYNC from fuel #13]</div>
<svg class="ic" style="left:1191.8px;top:674.44px;width:13.2px;height:13.2px;" viewBox="0 0 24 24" fill="none" stroke="#d1d5db" stroke-width="2" stroke-linecap="round" stroke-linejoin="round"><path d="M12 3H5a2 2 0 0 0-2 2v14a2 2 0 0 0 2 2h14a2 2 0 0 0 2-2v-7"/><path d="M18.375 2.625a1 1 0 0 1 3 3l-9.013 9.014a2 2 0 0 1-.853.505l-2.873.84a.5.5 0 0 1-.62-.62l.84-2.873a2 2 0 0 1 .506-.852z"/></svg>
<svg class="ic" style="left:1211px;top:674.34px;width:13px;height:13px;" viewBox="0 0 24 24" fill="none" stroke="#ef4444" stroke-width="2" stroke-linecap="round" stroke-linejoin="round"><path d="M3 6h18"/><path d="M19 6v14c0 1-1 2-2 2H7c-1 0-2-1-2-2V6"/><path d="M8 6V4c0-1 1-2 2-2h4c1 0 2 1 2 2v2"/><line x1="10" x2="10" y1="11" y2="17"/><line x1="14" x2="14" y1="11" y2="17"/></svg>
<div class="blk" style="left:33px;top:699px;width:1204px;height:36px;background:#1c1f27;border-top:1px solid #393e4b;box-sizing:border-box"></div>
<svg class="ic" style="left:46.15px;top:711.07px;width:12.5px;height:12.5px;" viewBox="0 0 24 24" fill="none" stroke="#a3a8b1" stroke-width="2" stroke-linecap="round" stroke-linejoin="round"><path d="M8 2v4"/><path d="M16 2v4"/><rect width="18" height="18" x="3" y="4" rx="2"/><path d="M3 10h18"/></svg>
<div class="t" style="left:65.3px;top:712.48px;font-size:10.8px;line-height:10.8px;color:#e8eaee;font-weight:400;font-family:'Liberation Sans', sans-serif;-webkit-text-stroke:0.12px #e8eaee">Jul 10, 2024</div>
<svg class="ic" style="left:333.4px;top:711.12px;width:12px;height:12px;" viewBox="0 0 24 24" fill="none" stroke="#a3a8b1" stroke-width="2" stroke-linecap="round" stroke-linejoin="round"><path d="m12 14 4-4"/><path d="M3.34 19a10 10 0 1 1 17.32 0"/></svg>
<div class="t" style="left:351.8px;top:712.31px;font-size:11px;line-height:11px;color:#f1f2f4;font-weight:400;font-family:'Liberation Sans', sans-serif;-webkit-text-stroke:0.35px #f1f2f4;letter-spacing:-0.05px">149,600 miles</div>
<div class="t" style="left:625.5px;top:712.52px;font-size:10.75px;line-height:10.75px;color:#e8eaee;font-weight:400;font-family:'Liberation Sans', sans-serif;-webkit-text-stroke:0.12px #e8eaee">[AUTO-SYNC from fuel #12]</div>
<svg class="ic" style="left:1191.8px;top:710.62px;width:13.2px;height:13.2px;" viewBox="0 0 24 24" fill="none" stroke="#d1d5db" stroke-width="2" stroke-linecap="round" stroke-linejoin="round"><path d="M12 3H5a2 2 0 0 0-2 2v14a2 2 0 0 0 2 2h14a2 2 0 0 0 2-2v-7"/><path d="M18.375 2.625a1 1 0 0 1 3 3l-9.013 9.014a2 2 0 0 1-.853.505l-2.873.84a.5.5 0 0 1-.62-.62l.84-2.873a2 2 0 0 1 .506-.852z"/></svg>
<svg class="ic" style="left:1211px;top:710.52px;width:13px;height:13px;" viewBox="0 0 24 24" fill="none" stroke="#ef4444" stroke-width="2" stroke-linecap="round" stroke-linejoin="round"><path d="M3 6h18"/><path d="M19 6v14c0 1-1 2-2 2H7c-1 0-2-1-2-2V6"/><path d="M8 6V4c0-1 1-2 2-2h4c1 0 2 1 2 2v2"/><line x1="10" x2="10" y1="11" y2="17"/><line x1="14" x2="14" y1="11" y2="17"/></svg>
<div class="blk" style="left:33px;top:735px;width:1204px;height:36px;background:#1c1f27;border-top:1px solid #393e4b;box-sizing:border-box"></div>
<svg class="ic" style="left:46.15px;top:747.25px;width:12.5px;height:12.5px;" viewBox="0 0 24 24" fill="none" stroke="#a3a8b1" stroke-width="2" stroke-linecap="round" stroke-linejoin="round"><path d="M8 2v4"/><path d="M16 2v4"/><rect width="18" height="18" x="3" y="4" rx="2"/><path d="M3 10h18"/></svg>
<div class="t" style="left:65.3px;top:748.66px;font-size:10.8px;line-height:10.8px;color:#e8eaee;font-weight:400;font-family:'Liberation Sans', sans-serif;-webkit-text-stroke:0.12px #e8eaee">Jun 28, 2024</div>
<svg class="ic" style="left:333.4px;top:747.3px;width:12px;height:12px;" viewBox="0 0 24 24" fill="none" stroke="#a3a8b1" stroke-width="2" stroke-linecap="round" stroke-linejoin="round"><path d="m12 14 4-4"/><path d="M3.34 19a10 10 0 1 1 17.32 0"/></svg>
<div class="t" style="left:351.8px;top:748.49px;font-size:11px;line-height:11px;color:#f1f2f4;font-weight:400;font-family:'Liberation Sans', sans-serif;-webkit-text-stroke:0.35px #f1f2f4;letter-spacing:-0.05px">152,000 miles</div>
<div class="t" style="left:625.5px;top:748.70px;font-size:10.75px;line-height:10.75px;color:#e8eaee;font-weight:400;font-family:'Liberation Sans', sans-serif;-webkit-text-stroke:0.12px #e8eaee">[AUTO-SYNC from service #4]</div>
<svg class="ic" style="left:1191.8px;top:746.8px;width:13.2px;height:13.2px;" viewBox="0 0 24 24" fill="none" stroke="#d1d5db" stroke-width="2" stroke-linecap="round" stroke-linejoin="round"><path d="M12 3H5a2 2 0 0 0-2 2v14a2 2 0 0 0 2 2h14a2 2 0 0 0 2-2v-7"/><path d="M18.375 2.625a1 1 0 0 1 3 3l-9.013 9.014a2 2 0 0 1-.853.505l-2.873.84a.5.5 0 0 1-.62-.62l.84-2.873a2 2 0 0 1 .506-.852z"/></svg>
<svg class="ic" style="left:1211px;top:746.6999999999999px;width:13px;height:13px;" viewBox="0 0 24 24" fill="none" stroke="#ef4444" stroke-width="2" stroke-linecap="round" stroke-linejoin="round"><path d="M3 6h18"/><path d="M19 6v14c0 1-1 2-2 2H7c-1 0-2-1-2-2V6"/><path d="M8 6V4c0-1 1-2 2-2h4c1 0 2 1 2 2v2"/><line x1="10" x2="10" y1="11" y2="17"/><line x1="14" x2="14" y1="11" y2="17"/></svg>
<div class="blk" style="left:33px;top:771px;width:1204px;height:36px;background:#1c1f27;border-top:1px solid #393e4b;box-sizing:border-box"></div>
<svg class="ic" style="left:46.15px;top:783.4300000000001px;width:12.5px;height:12.5px;" viewBox="0 0 24 24" fill="none" stroke="#a3a8b1" stroke-width="2" stroke-linecap="round" stroke-linejoin="round"><path d="M8 2v4"/><path d="M16 2v4"/><rect width="18" height="18" x="3" y="4" rx="2"/><path d="M3 10h18"/></svg>
<div class="t" style="left:65.3px;top:784.84px;font-size:10.8px;line-height:10.8px;color:#e8eaee;font-weight:400;font-family:'Liberation Sans', sans-serif;-webkit-text-stroke:0.12px #e8eaee">Jun 22, 2024</div>
<svg class="ic" style="left:333.4px;top:783.48px;width:12px;height:12px;" viewBox="0 0 24 24" fill="none" stroke="#a3a8b1" stroke-width="2" stroke-linecap="round" stroke-linejoin="round"><path d="m12 14 4-4"/><path d="M3.34 19a10 10 0 1 1 17.32 0"/></svg>
<div class="t" style="left:351.8px;top:784.67px;font-size:11px;line-height:11px;color:#f1f2f4;font-weight:400;font-family:'Liberation Sans', sans-serif;-webkit-text-stroke:0.35px #f1f2f4;letter-spacing:-0.05px">149,100 miles</div>
<div class="t" style="left:625.5px;top:784.88px;font-size:10.75px;line-height:10.75px;color:#e8eaee;font-weight:400;font-family:'Liberation Sans', sans-serif;-webkit-text-stroke:0.12px #e8eaee">[AUTO-SYNC from fuel #11]</div>
<svg class="ic" style="left:1191.8px;top:782.98px;width:13.2px;height:13.2px;" viewBox="0 0 24 24" fill="none" stroke="#d1d5db" stroke-width="2" stroke-linecap="round" stroke-linejoin="round"><path d="M12 3H5a2 2 0 0 0-2 2v14a2 2 0 0 0 2 2h14a2 2 0 0 0 2-2v-7"/><path d="M18.375 2.625a1 1 0 0 1 3 3l-9.013 9.014a2 2 0 0 1-.853.505l-2.873.84a.5.5 0 0 1-.62-.62l.84-2.873a2 2 0 0 1 .506-.852z"/></svg>
<svg class="ic" style="left:1211px;top:782.88px;width:13px;height:13px;" viewBox="0 0 24 24" fill="none" stroke="#ef4444" stroke-width="2" stroke-linecap="round" stroke-linejoin="round"><path d="M3 6h18"/><path d="M19 6v14c0 1-1 2-2 2H7c-1 0-2-1-2-2V6"/><path d="M8 6V4c0-1 1-2 2-2h4c1 0 2 1 2 2v2"/><line x1="10" x2="10" y1="11" y2="17"/><line x1="14" x2="14" y1="11" y2="17"/></svg>
<div class="blk" style="left:33px;top:807px;width:1204px;height:36px;background:#1c1f27;border-top:1px solid #393e4b;box-sizing:border-box"></div>
<svg class="ic" style="left:46.15px;top:819.61px;width:12.5px;height:12.5px;" viewBox="0 0 24 24" fill="none" stroke="#a3a8b1" stroke-width="2" stroke-linecap="round" stroke-linejoin="round"><path d="M8 2v4"/><path d="M16 2v4"/><rect width="18" height="18" x="3" y="4" rx="2"/><path d="M3 10h18"/></svg>
<div class="t" style="left:65.3px;top:821.02px;font-size:10.8px;line-height:10.8px;color:#e8eaee;font-weight:400;font-family:'Liberation Sans', sans-serif;-webkit-text-stroke:0.12px #e8eaee">Jun 5, 2024</div>
<svg class="ic" style="left:333.4px;top:819.66px;width:12px;height:12px;" viewBox="0 0 24 24" fill="none" stroke="#a3a8b1" stroke-width="2" stroke-linecap="round" stroke-linejoin="round"><path d="m12 14 4-4"/><path d="M3.34 19a10 10 0 1 1 17.32 0"/></svg>
<div class="t" style="left:351.8px;top:820.85px;font-size:11px;line-height:11px;color:#f1f2f4;font-weight:400;font-family:'Liberation Sans', sans-serif;-webkit-text-stroke:0.35px #f1f2f4;letter-spacing:-0.05px">148,500 miles</div>
<div class="t" style="left:625.5px;top:821.06px;font-size:10.75px;line-height:10.75px;color:#e8eaee;font-weight:400;font-family:'Liberation Sans', sans-serif;-webkit-text-stroke:0.12px #e8eaee">[AUTO-SYNC from fuel #10]</div>
<svg class="ic" style="left:1191.8px;top:819.16px;width:13.2px;height:13.2px;" viewBox="0 0 24 24" fill="none" stroke="#d1d5db" stroke-width="2" stroke-linecap="round" stroke-linejoin="round"><path d="M12 3H5a2 2 0 0 0-2 2v14a2 2 0 0 0 2 2h14a2 2 0 0 0 2-2v-7"/><path d="M18.375 2.625a1 1 0 0 1 3 3l-9.013 9.014a2 2 0 0 1-.853.505l-2.873.84a.5.5 0 0 1-.62-.62l.84-2.873a2 2 0 0 1 .506-.852z"/></svg>
<svg class="ic" style="left:1211px;top:819.06px;width:13px;height:13px;" viewBox="0 0 24 24" fill="none" stroke="#ef4444" stroke-width="2" stroke-linecap="round" stroke-linejoin="round"><path d="M3 6h18"/><path d="M19 6v14c0 1-1 2-2 2H7c-1 0-2-1-2-2V6"/><path d="M8 6V4c0-1 1-2 2-2h4c1 0 2 1 2 2v2"/><line x1="10" x2="10" y1="11" y2="17"/><line x1="14" x2="14" y1="11" y2="17"/></svg>
<div class="blk" style="left:33px;top:843px;width:1204px;height:37px;background:#1c1f27;border-top:1px solid #393e4b;box-sizing:border-box"></div>
<svg class="ic" style="left:46.15px;top:855.79px;width:12.5px;height:12.5px;" viewBox="0 0 24 24" fill="none" stroke="#a3a8b1" stroke-width="2" stroke-linecap="round" stroke-linejoin="round"><path d="M8 2v4"/><path d="M16 2v4"/><rect width="18" height="18" x="3" y="4" rx="2"/><path d="M3 10h18"/></svg>
<div class="t" style="left:65.3px;top:857.20px;font-size:10.8px;line-height:10.8px;color:#e8eaee;font-weight:400;font-family:'Liberation Sans', sans-serif;-webkit-text-stroke:0.12px #e8eaee">May 20, 2024</div>
<svg class="ic" style="left:333.4px;top:855.8399999999999px;width:12px;height:12px;" viewBox="0 0 24 24" fill="none" stroke="#a3a8b1" stroke-width="2" stroke-linecap="round" stroke-linejoin="round"><path d="m12 14 4-4"/><path d="M3.34 19a10 10 0 1 1 17.32 0"/></svg>
<div class="t" style="left:351.8px;top:857.03px;font-size:11px;line-height:11px;color:#f1f2f4;font-weight:400;font-family:'Liberation Sans', sans-serif;-webkit-text-stroke:0.35px #f1f2f4;letter-spacing:-0.05px">148,000 miles</div>
<div class="t" style="left:625.5px;top:857.24px;font-size:10.75px;line-height:10.75px;color:#e8eaee;font-weight:400;font-family:'Liberation Sans', sans-serif;-webkit-text-stroke:0.12px #e8eaee">[AUTO-SYNC from fuel #9]</div>
<svg class="ic" style="left:1191.8px;top:855.3399999999999px;width:13.2px;height:13.2px;" viewBox="0 0 24 24" fill="none" stroke="#d1d5db" stroke-width="2" stroke-linecap="round" stroke-linejoin="round"><path d="M12 3H5a2 2 0 0 0-2 2v14a2 2 0 0 0 2 2h14a2 2 0 0 0 2-2v-7"/><path d="M18.375 2.625a1 1 0 0 1 3 3l-9.013 9.014a2 2 0 0 1-.853.505l-2.873.84a.5.5 0 0 1-.62-.62l.84-2.873a2 2 0 0 1 .506-.852z"/></svg>
<svg class="ic" style="left:1211px;top:855.2399999999999px;width:13px;height:13px;" viewBox="0 0 24 24" fill="none" stroke="#ef4444" stroke-width="2" stroke-linecap="round" stroke-linejoin="round"><path d="M3 6h18"/><path d="M19 6v14c0 1-1 2-2 2H7c-1 0-2-1-2-2V6"/><path d="M8 6V4c0-1 1-2 2-2h4c1 0 2 1 2 2v2"/><line x1="10" x2="10" y1="11" y2="17"/><line x1="14" x2="14" y1="11" y2="17"/></svg>
<div class="blk" style="left:33px;top:880px;width:1204px;height:36px;background:#1c1f27;border-top:1px solid #393e4b;box-sizing:border-box"></div>
<svg class="ic" style="left:46.15px;top:891.97px;width:12.5px;height:12.5px;" viewBox="0 0 24 24" fill="none" stroke="#a3a8b1" stroke-width="2" stroke-linecap="round" stroke-linejoin="round"><path d="M8 2v4"/><path d="M16 2v4"/><rect width="18" height="18" x="3" y="4" rx="2"/><path d="M3 10h18"/></svg>
<div class="t" style="left:65.3px;top:893.38px;font-size:10.8px;line-height:10.8px;color:#e8eaee;font-weight:400;font-family:'Liberation Sans', sans-serif;-webkit-text-stroke:0.12px #e8eaee">May 10, 2024</div>
<svg class="ic" style="left:333.4px;top:892.02px;width:12px;height:12px;" viewBox="0 0 24 24" fill="none" stroke="#a3a8b1" stroke-width="2" stroke-linecap="round" stroke-linejoin="round"><path d="m12 14 4-4"/><path d="M3.34 19a10 10 0 1 1 17.32 0"/></svg>
<div class="t" style="left:351.8px;top:893.21px;font-size:11px;line-height:11px;color:#f1f2f4;font-weight:400;font-family:'Liberation Sans', sans-serif;-webkit-text-stroke:0.35px #f1f2f4;letter-spacing:-0.05px">150,000 miles</div>
<div class="t" style="left:625.5px;top:893.42px;font-size:10.75px;line-height:10.75px;color:#e8eaee;font-weight:400;font-family:'Liberation Sans', sans-serif;-webkit-text-stroke:0.12px #e8eaee">[AUTO-SYNC from service #3]</div>
<svg class="ic" style="left:1191.8px;top:891.52px;width:13.2px;height:13.2px;" viewBox="0 0 24 24" fill="none" stroke="#d1d5db" stroke-width="2" stroke-linecap="round" stroke-linejoin="round"><path d="M12 3H5a2 2 0 0 0-2 2v14a2 2 0 0 0 2 2h14a2 2 0 0 0 2-2v-7"/><path d="M18.375 2.625a1 1 0 0 1 3 3l-9.013 9.014a2 2 0 0 1-.853.505l-2.873.84a.5.5 0 0 1-.62-.62l.84-2.873a2 2 0 0 1 .506-.852z"/></svg>
<svg class="ic" style="left:1211px;top:891.42px;width:13px;height:13px;" viewBox="0 0 24 24" fill="none" stroke="#ef4444" stroke-width="2" stroke-linecap="round" stroke-linejoin="round"><path d="M3 6h18"/><path d="M19 6v14c0 1-1 2-2 2H7c-1 0-2-1-2-2V6"/><path d="M8 6V4c0-1 1-2 2-2h4c1 0 2 1 2 2v2"/><line x1="10" x2="10" y1="11" y2="17"/><line x1="14" x2="14" y1="11" y2="17"/></svg>
<div class="blk" style="left:33px;top:916px;width:1204px;height:36px;background:#1c1f27;border-top:1px solid #393e4b;box-sizing:border-box"></div>
<svg class="ic" style="left:46.15px;top:928.1500000000001px;width:12.5px;height:12.5px;" viewBox="0 0 24 24" fill="none" stroke="#a3a8b1" stroke-width="2" stroke-linecap="round" stroke-linejoin="round"><path d="M8 2v4"/><path d="M16 2v4"/><rect width="18" height="18" x="3" y="4" rx="2"/><path d="M3 10h18"/></svg>
<div class="t" style="left:65.3px;top:929.56px;font-size:10.8px;line-height:10.8px;color:#e8eaee;font-weight:400;font-family:'Liberation Sans', sans-serif;-webkit-text-stroke:0.12px #e8eaee">May 2, 2024</div>
<svg class="ic" style="left:333.4px;top:928.2px;width:12px;height:12px;" viewBox="0 0 24 24" fill="none" stroke="#a3a8b1" stroke-width="2" stroke-linecap="round" stroke-linejoin="round"><path d="m12 14 4-4"/><path d="M3.34 19a10 10 0 1 1 17.32 0"/></svg>
<div class="t" style="left:351.8px;top:929.39px;font-size:11px;line-height:11px;color:#f1f2f4;font-weight:400;font-family:'Liberation Sans', sans-serif;-webkit-text-stroke:0.35px #f1f2f4;letter-spacing:-0.05px">147,500 miles</div>
<div class="t" style="left:625.5px;top:929.60px;font-size:10.75px;line-height:10.75px;color:#e8eaee;font-weight:400;font-family:'Liberation Sans', sans-serif;-webkit-text-stroke:0.12px #e8eaee">[AUTO-SYNC from fuel #8]</div>
<svg class="ic" style="left:1191.8px;top:927.7px;width:13.2px;height:13.2px;" viewBox="0 0 24 24" fill="none" stroke="#d1d5db" stroke-width="2" stroke-linecap="round" stroke-linejoin="round"><path d="M12 3H5a2 2 0 0 0-2 2v14a2 2 0 0 0 2 2h14a2 2 0 0 0 2-2v-7"/><path d="M18.375 2.625a1 1 0 0 1 3 3l-9.013 9.014a2 2 0 0 1-.853.505l-2.873.84a.5.5 0 0 1-.62-.62l.84-2.873a2 2 0 0 1 .506-.852z"/></svg>
<svg class="ic" style="left:1211px;top:927.6px;width:13px;height:13px;" viewBox="0 0 24 24" fill="none" stroke="#ef4444" stroke-width="2" stroke-linecap="round" stroke-linejoin="round"><path d="M3 6h18"/><path d="M19 6v14c0 1-1 2-2 2H7c-1 0-2-1-2-2V6"/><path d="M8 6V4c0-1 1-2 2-2h4c1 0 2 1 2 2v2"/><line x1="10" x2="10" y1="11" y2="17"/><line x1="14" x2="14" y1="11" y2="17"/></svg>
<div class="blk" style="left:33px;top:952px;width:1204px;height:36px;background:#1c1f27;border-top:1px solid #393e4b;box-sizing:border-box"></div>
<svg class="ic" style="left:46.15px;top:964.33px;width:12.5px;height:12.5px;" viewBox="0 0 24 24" fill="none" stroke="#a3a8b1" stroke-width="2" stroke-linecap="round" stroke-linejoin="round"><path d="M8 2v4"/><path d="M16 2v4"/><rect width="18" height="18" x="3" y="4" rx="2"/><path d="M3 10h18"/></svg>
<div class="t" style="left:65.3px;top:965.74px;font-size:10.8px;line-height:10.8px;color:#e8eaee;font-weight:400;font-family:'Liberation Sans', sans-serif;-webkit-text-stroke:0.12px #e8eaee">Apr 15, 2024</div>
<svg class="ic" style="left:333.4px;top:964.38px;width:12px;height:12px;" viewBox="0 0 24 24" fill="none" stroke="#a3a8b1" stroke-width="2" stroke-linecap="round" stroke-linejoin="round"><path d="m12 14 4-4"/><path d="M3.34 19a10 10 0 1 1 17.32 0"/></svg>
<div class="t" style="left:351.8px;top:965.57px;font-size:11px;line-height:11px;color:#f1f2f4;font-weight:400;font-family:'Liberation Sans', sans-serif;-webkit-text-stroke:0.35px #f1f2f4;letter-spacing:-0.05px">147,000 miles</div>
<div class="t" style="left:625.5px;top:965.78px;font-size:10.75px;line-height:10.75px;color:#e8eaee;font-weight:400;font-family:'Liberation Sans', sans-serif;-webkit-text-stroke:0.12px #e8eaee">[AUTO-SYNC from fuel #7]</div>
<svg class="ic" style="left:1191.8px;top:963.88px;width:13.2px;height:13.2px;" viewBox="0 0 24 24" fill="none" stroke="#d1d5db" stroke-width="2" stroke-linecap="round" stroke-linejoin="round"><path d="M12 3H5a2 2 0 0 0-2 2v14a2 2 0 0 0 2 2h14a2 2 0 0 0 2-2v-7"/><path d="M18.375 2.625a1 1 0 0 1 3 3l-9.013 9.014a2 2 0 0 1-.853.505l-2.873.84a.5.5 0 0 1-.62-.62l.84-2.873a2 2 0 0 1 .506-.852z"/></svg>
<svg class="ic" style="left:1211px;top:963.78px;width:13px;height:13px;" viewBox="0 0 24 24" fill="none" stroke="#ef4444" stroke-width="2" stroke-linecap="round" stroke-linejoin="round"><path d="M3 6h18"/><path d="M19 6v14c0 1-1 2-2 2H7c-1 0-2-1-2-2V6"/><path d="M8 6V4c0-1 1-2 2-2h4c1 0 2 1 2 2v2"/><line x1="10" x2="10" y1="11" y2="17"/><line x1="14" x2="14" y1="11" y2="17"/></svg>
<div class="blk" style="left:33px;top:988px;width:1204px;height:36px;background:#1c1f27;border-top:1px solid #393e4b;box-sizing:border-box"></div>
<svg class="ic" style="left:46.15px;top:1000.51px;width:12.5px;height:12.5px;" viewBox="0 0 24 24" fill="none" stroke="#a3a8b1" stroke-width="2" stroke-linecap="round" stroke-linejoin="round"><path d="M8 2v4"/><path d="M16 2v4"/><rect width="18" height="18" x="3" y="4" rx="2"/><path d="M3 10h18"/></svg>
<div class="t" style="left:65.3px;top:1001.92px;font-size:10.8px;line-height:10.8px;color:#e8eaee;font-weight:400;font-family:'Liberation Sans', sans-serif;-webkit-text-stroke:0.12px #e8eaee">Mar 28, 2024</div>
<svg class="ic" style="left:333.4px;top:1000.56px;width:12px;height:12px;" viewBox="0 0 24 24" fill="none" stroke="#a3a8b1" stroke-width="2" stroke-linecap="round" stroke-linejoin="round"><path d="m12 14 4-4"/><path d="M3.34 19a10 10 0 1 1 17.32 0"/></svg>
<div class="t" style="left:351.8px;top:1001.75px;font-size:11px;line-height:11px;color:#f1f2f4;font-weight:400;font-family:'Liberation Sans', sans-serif;-webkit-text-stroke:0.35px #f1f2f4;letter-spacing:-0.05px">146,500 miles</div>
<div class="t" style="left:625.5px;top:1001.96px;font-size:10.75px;line-height:10.75px;color:#e8eaee;font-weight:400;font-family:'Liberation Sans', sans-serif;-webkit-text-stroke:0.12px #e8eaee">[AUTO-SYNC from fuel #6]</div>
<svg class="ic" style="left:1191.8px;top:1000.06px;width:13.2px;height:13.2px;" viewBox="0 0 24 24" fill="none" stroke="#d1d5db" stroke-width="2" stroke-linecap="round" stroke-linejoin="round"><path d="M12 3H5a2 2 0 0 0-2 2v14a2 2 0 0 0 2 2h14a2 2 0 0 0 2-2v-7"/><path d="M18.375 2.625a1 1 0 0 1 3 3l-9.013 9.014a2 2 0 0 1-.853.505l-2.873.84a.5.5 0 0 1-.62-.62l.84-2.873a2 2 0 0 1 .506-.852z"/></svg>
<svg class="ic" style="left:1211px;top:999.9599999999999px;width:13px;height:13px;" viewBox="0 0 24 24" fill="none" stroke="#ef4444" stroke-width="2" stroke-linecap="round" stroke-linejoin="round"><path d="M3 6h18"/><path d="M19 6v14c0 1-1 2-2 2H7c-1 0-2-1-2-2V6"/><path d="M8 6V4c0-1 1-2 2-2h4c1 0 2 1 2 2v2"/><line x1="10" x2="10" y1="11" y2="17"/><line x1="14" x2="14" y1="11" y2="17"/></svg>
<div class="blk" style="left:33px;top:1024px;width:1204px;height:36px;background:#1c1f27;border-top:1px solid #393e4b;box-sizing:border-box"></div>
<svg class="ic" style="left:46.15px;top:1036.69px;width:12.5px;height:12.5px;" viewBox="0 0 24 24" fill="none" stroke="#a3a8b1" stroke-width="2" stroke-linecap="round" stroke-linejoin="round"><path d="M8 2v4"/><path d="M16 2v4"/><rect width="18" height="18" x="3" y="4" rx="2"/><path d="M3 10h18"/></svg>
<div class="t" style="left:65.3px;top:1038.10px;font-size:10.8px;line-height:10.8px;color:#e8eaee;font-weight:400;font-family:'Liberation Sans', sans-serif;-webkit-text-stroke:0.12px #e8eaee">Mar 22, 2024</div>
<svg class="ic" style="left:333.4px;top:1036.74px;width:12px;height:12px;" viewBox="0 0 24 24" fill="none" stroke="#a3a8b1" stroke-width="2" stroke-linecap="round" stroke-linejoin="round"><path d="m12 14 4-4"/><path d="M3.34 19a10 10 0 1 1 17.32 0"/></svg>
<div class="t" style="left:351.8px;top:1037.93px;font-size:11px;line-height:11px;color:#f1f2f4;font-weight:400;font-family:'Liberation Sans', sans-serif;-webkit-text-stroke:0.35px #f1f2f4;letter-spacing:-0.05px">147,500 miles</div>
<div class="t" style="left:625.5px;top:1038.14px;font-size:10.75px;line-height:10.75px;color:#e8eaee;font-weight:400;font-family:'Liberation Sans', sans-serif;-webkit-text-stroke:0.12px #e8eaee">[AUTO-SYNC from service #2]</div>
<svg class="ic" style="left:1191.8px;top:1036.24px;width:13.2px;height:13.2px;" viewBox="0 0 24 24" fill="none" stroke="#d1d5db" stroke-width="2" stroke-linecap="round" stroke-linejoin="round"><path d="M12 3H5a2 2 0 0 0-2 2v14a2 2 0 0 0 2 2h14a2 2 0 0 0 2-2v-7"/><path d="M18.375 2.625a1 1 0 0 1 3 3l-9.013 9.014a2 2 0 0 1-.853.505l-2.873.84a.5.5 0 0 1-.62-.62l.84-2.873a2 2 0 0 1 .506-.852z"/></svg>
<svg class="ic" style="left:1211px;top:1036.14px;width:13px;height:13px;" viewBox="0 0 24 24" fill="none" stroke="#ef4444" stroke-width="2" stroke-linecap="round" stroke-linejoin="round"><path d="M3 6h18"/><path d="M19 6v14c0 1-1 2-2 2H7c-1 0-2-1-2-2V6"/><path d="M8 6V4c0-1 1-2 2-2h4c1 0 2 1 2 2v2"/><line x1="10" x2="10" y1="11" y2="17"/><line x1="14" x2="14" y1="11" y2="17"/></svg>
</body></html>
